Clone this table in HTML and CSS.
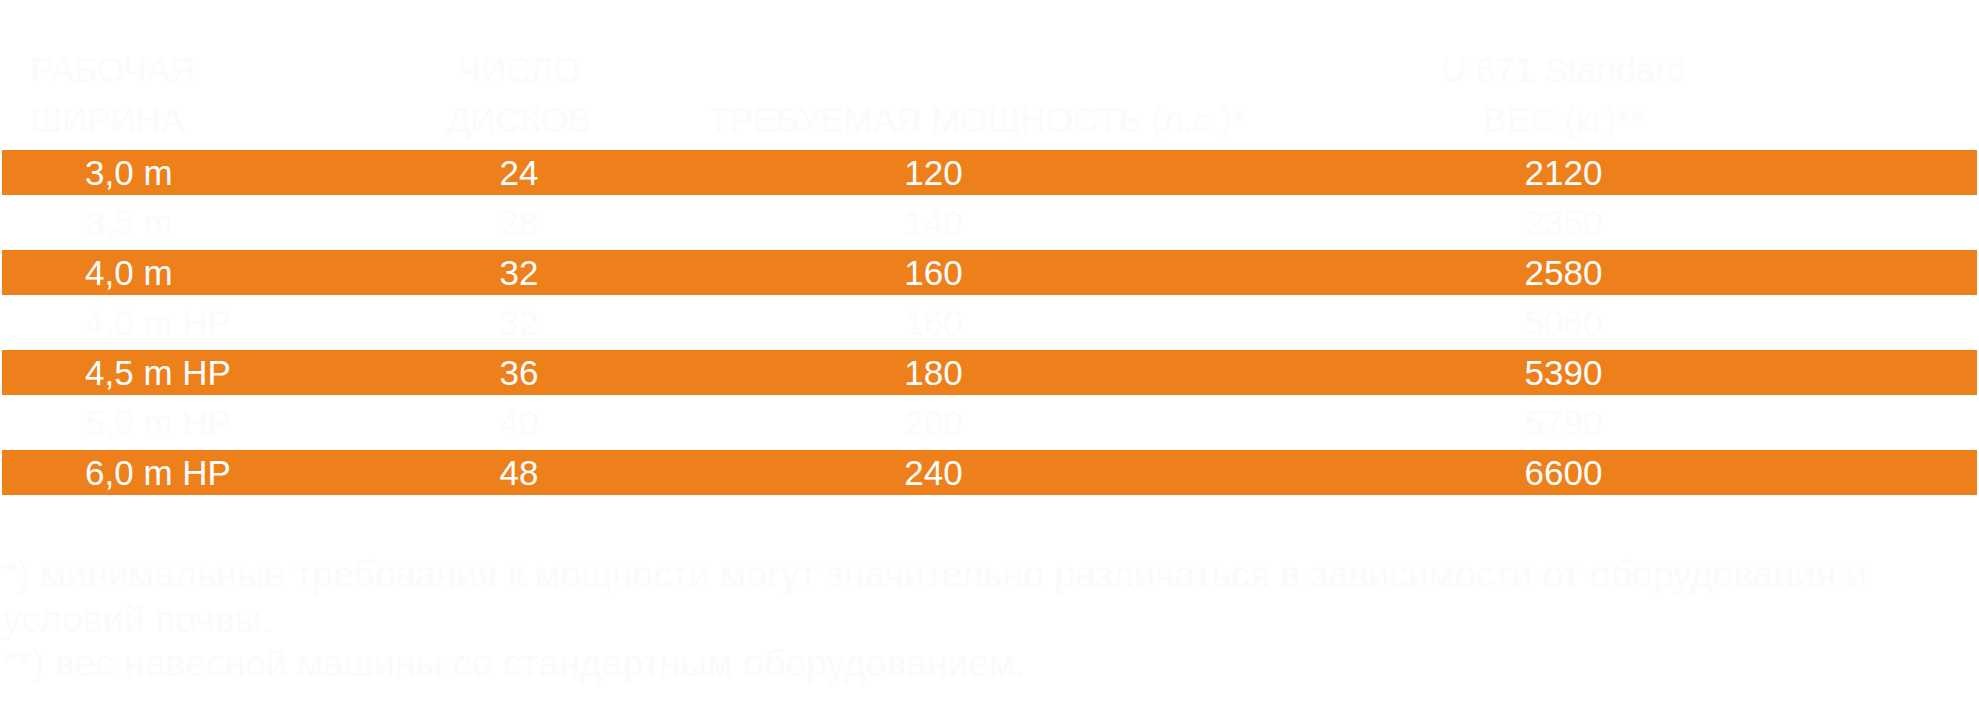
FILE: index.html
```html
<!DOCTYPE html>
<html lang="ru">
<head>
<meta charset="utf-8">
<title>U 671</title>
<link rel="stylesheet" href="styles.css">
</head>
<body>
<div class="sheet">
  <div class="grid head">
    <div class="hc hc-first">РАБОЧАЯ<br>ШИРИНА</div>
    <div class="hc">ЧИСЛО<br>ДИСКОВ</div>
    <div class="hc hc-low">ТРЕБУЕМАЯ МОЩНОСТЬ (л.с.)*</div>
    <div class="hc">U 671 Standard<br>ВЕС (кг)**</div>
  </div>
  <div class="rows">
    <div class="grid row row-hi"><div class="c c-first">3,0 m</div><div class="c">24</div><div class="c c-3">120</div><div class="c">2120</div></div>
    <div class="grid row row-lo"><div class="c c-first">3,5 m</div><div class="c">28</div><div class="c c-3">140</div><div class="c">2350</div></div>
    <div class="grid row row-hi"><div class="c c-first">4,0 m</div><div class="c">32</div><div class="c c-3">160</div><div class="c">2580</div></div>
    <div class="grid row row-lo"><div class="c c-first">4,0 m HP</div><div class="c">32</div><div class="c c-3">160</div><div class="c">5060</div></div>
    <div class="grid row row-hi"><div class="c c-first">4,5 m HP</div><div class="c">36</div><div class="c c-3">180</div><div class="c">5390</div></div>
    <div class="grid row row-lo"><div class="c c-first">5,0 m HP</div><div class="c">40</div><div class="c c-3">200</div><div class="c">5790</div></div>
    <div class="grid row row-hi"><div class="c c-first">6,0 m HP</div><div class="c">48</div><div class="c c-3">240</div><div class="c">6600</div></div>
  </div>
  <div class="notes">
    <p class="note">*) минимальные требования к мощности могут значительно различаться в зависимости от оборудования и<br>условий почвы.</p>
    <p class="note">**) вес навесной машины со стандартным оборудованием.</p>
  </div>
</div>
</body>
</html>
```
FILE: styles.css
```css
html, body {
  margin: 0;
  padding: 0;
  background: #ffffff;
}
body {
  width: 1979px;
  height: 701px;
  overflow: hidden;
  font-family: "Liberation Sans", Arial, sans-serif;
  font-size: 35px;
}
.sheet {
  padding-top: 45px;
}
.grid {
  display: grid;
  grid-template-columns: 328px 378px 442px 1fr;
  margin: 0 2px;
}
.head {
  color: #fbfbfb;
  line-height: 50px;
  height: 100px;
  margin-bottom: 5px;
}
.hc {
  text-align: center;
  white-space: nowrap;
}
.hc-first {
  text-align: left;
  padding-left: 28px;
}
.hc-low {
  align-self: end;
}
.rows {
  display: flex;
  flex-direction: column;
}
.row {
  line-height: 45px;
}
.row-hi {
  background: #ee801c;
  color: #ffffff;
  height: 45px;
}
.row-lo {
  color: #fbfbfb;
  height: 55px;
  line-height: 55px;
}
.c {
  text-align: center;
  white-space: nowrap;
}
.c-3 {
  padding-left: 9px;
}
.c-first {
  text-align: left;
  padding-left: 83px;
}
.notes {
  margin-top: 57px;
  padding-left: 3px;
  color: #fbfbfb;
  font-size: 37.4px;
}
.note {
  margin: 0;
  line-height: 44.5px;
  white-space: nowrap;
}
```
